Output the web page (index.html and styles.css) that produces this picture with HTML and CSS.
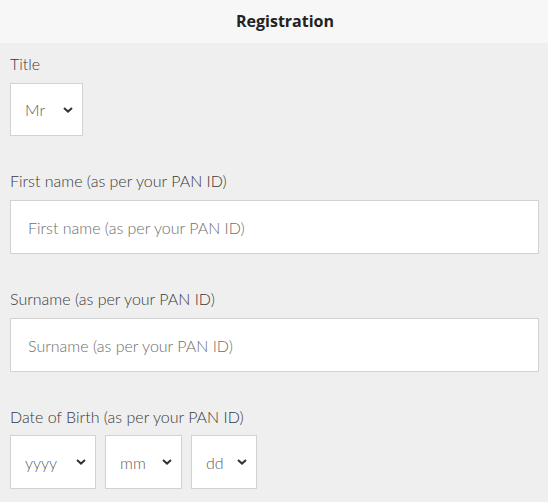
FILE: index.html
```html
<!DOCTYPE html>
<html lang="en">
<head>
<meta charset="utf-8">
<title>Registration</title>
<link rel="stylesheet" href="styles.css">
</head>
<body>
<header class="topbar"><h1 class="topbar-title">Registration</h1></header>
<main class="form">
  <div class="field">
    <label class="field-label">Title</label>
    <div class="select select-title"><span class="select-value">Mr</span><svg class="chev" viewBox="0 0 10 6" width="10" height="6"><path d="M1 1l4 3.6L9 1" fill="none" stroke="#333" stroke-width="2"/></svg></div>
  </div>
  <div class="field">
    <label class="field-label">First name (as per your PAN ID)</label>
    <div class="input"><span class="placeholder">First name (as per your PAN ID)</span></div>
  </div>
  <div class="field">
    <label class="field-label">Surname (as per your PAN ID)</label>
    <div class="input"><span class="placeholder">Surname (as per your PAN ID)</span></div>
  </div>
  <div class="field">
    <label class="field-label">Date of Birth (as per your PAN ID)</label>
    <div class="dob">
      <div class="select select-yyyy"><span class="select-value">yyyy</span><svg class="chev" viewBox="0 0 10 6" width="10" height="6"><path d="M1 1l4 3.6L9 1" fill="none" stroke="#333" stroke-width="2"/></svg></div>
      <div class="select select-mm"><span class="select-value">mm</span><svg class="chev" viewBox="0 0 10 6" width="10" height="6"><path d="M1 1l4 3.6L9 1" fill="none" stroke="#333" stroke-width="2"/></svg></div>
      <div class="select select-dd"><span class="select-value">dd</span><svg class="chev" viewBox="0 0 10 6" width="10" height="6"><path d="M1 1l4 3.6L9 1" fill="none" stroke="#333" stroke-width="2"/></svg></div>
    </div>
  </div>
</main>
</body>
</html>
```
FILE: styles.css
```css
html, body {
  margin: 0;
  padding: 0;
}
body {
  background: #efefef;
  font-family: Lato, "Open Sans", sans-serif;
  font-weight: 300;
  color: #3a3a3a;
  font-size: 16px;
}
.topbar {
  height: 43px;
  background: #f7f7f7;
  display: flex;
  align-items: center;
  justify-content: center;
  padding-left: 22px;
}
.topbar-title {
  margin: 0 0 1px;
  font-family: "Open Sans", sans-serif;
  font-size: 16px;
  font-weight: 700;
  color: #222;
}
.form {
  padding: 11px 9px 0 10px;
  display: flex;
  flex-direction: column;
}
.field {
  display: flex;
  flex-direction: column;
  align-items: flex-start;
  margin-bottom: 35px;
}
.field-label {
  line-height: 20px;
  margin-bottom: 9px;
  color: #3a3a3a;
}
.input {
  align-self: stretch;
  height: 54px;
  box-sizing: border-box;
  background: #fff;
  border: 1px solid #d2d2d2;
  display: flex;
  align-items: center;
  padding-left: 17px;
}
.placeholder {
  color: #6e6e6e;
}
.select {
  box-sizing: border-box;
  height: 54px;
  background: #fff;
  border: 1px solid #d2d2d2;
  display: flex;
  align-items: center;
  justify-content: space-between;
  padding: 0 9px 0 14px;
  color: #5e5e5e;
}
.select-title { width: 73px; height: 53px; }
.select-yyyy { width: 86px; }
.select-mm { width: 77px; }
.select-dd { width: 66px; }
.chev { display: block; }
.dob {
  display: flex;
  gap: 9px;
  margin-top: -1px;
}
```
